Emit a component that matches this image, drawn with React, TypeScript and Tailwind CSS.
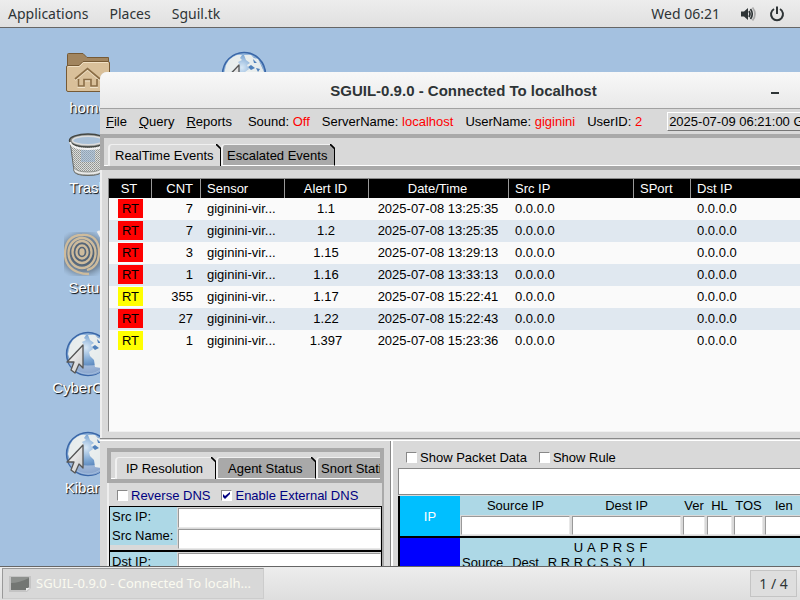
import type { ReactNode } from "react";

type Event = { level: "red" | "yellow"; count: number; id: string; time: string };

const events: Event[] = [
  { level: "red", count: 7, id: "1.1", time: "2025-07-08 13:25:35" },
  { level: "red", count: 7, id: "1.2", time: "2025-07-08 13:25:35" },
  { level: "red", count: 3, id: "1.15", time: "2025-07-08 13:29:13" },
  { level: "red", count: 1, id: "1.16", time: "2025-07-08 13:33:13" },
  { level: "yellow", count: 355, id: "1.17", time: "2025-07-08 15:22:41" },
  { level: "red", count: 27, id: "1.22", time: "2025-07-08 15:22:43" },
  { level: "yellow", count: 1, id: "1.397", time: "2025-07-08 15:23:36" },
];

const panelFont = "font-['Noto_Sans',sans-serif]";
const sunken = "border border-t-[#999] border-l-[#999] border-r-[#e8e8e8] border-b-[#e8e8e8] bg-white outline-none";

function Tab({ active, className, children }: { active?: boolean; className: string; children: ReactNode }) {
  return (
    <button
      role="tab"
      aria-selected={!!active}
      className={`relative flex h-[22px] shrink-0 items-center whitespace-nowrap border-l-2 border-t border-l-[#f0f0f0] border-t-[#f0f0f0] border-r border-r-black rounded-tl-[4px] rounded-tr-[4px] ${active ? "bg-[#d9d9d9]" : "bg-[#a9a9a9] border-b border-b-white"} ${className}`}
    >
      {children}
      <svg className="absolute -right-px -top-px size-[5px]" viewBox="0 0 5 5" aria-hidden="true">
        <path d="M1 0H5V5Z" fill="#d9d9d9" />
        <path d="M0 0L5 5" stroke="#000" strokeWidth="1.6" />
      </svg>
    </button>
  );
}

function Check({ label, checked }: { label: string; checked?: boolean }) {
  return (
    <label className="flex items-center gap-[3px] whitespace-nowrap">
      <span className="relative size-[11px]">
        <input
          type="checkbox"
          defaultChecked={checked}
          className="peer block size-[11px] appearance-none border border-t-[#888] border-l-[#888] border-r-white border-b-white bg-white"
        />
        <svg className="pointer-events-none absolute inset-0 hidden size-[11px] peer-checked:block" viewBox="0 0 11 11" aria-hidden="true">
          <path d="M2 4V7L4 9L9 4V2L4 6Z" fill="#000080" />
        </svg>
      </span>
      {label}
    </label>
  );
}

function Globe({ cursor }: { cursor?: boolean }) {
  return (
    <svg className="size-12" viewBox="0 0 48 48" aria-hidden="true">
      <defs>
        <radialGradient id="sea" cx="45%" cy="35%" r="65%">
          <stop offset="0" stopColor="#d8e8f6" />
          <stop offset="0.45" stopColor="#7fa8d4" />
          <stop offset="1" stopColor="#2c5c9e" />
        </radialGradient>
        <linearGradient id="arrow" x1="0" y1="0" x2="1" y2="1">
          <stop offset="0" stopColor="#fff" />
          <stop offset="1" stopColor="#c8c8c8" />
        </linearGradient>
      </defs>
      <circle cx="24" cy="24" r="21.5" fill="url(#sea)" stroke="#3a67a8" strokeWidth="1.4" />
      <path d="M4 31Q24 40 44 31Q40 45 24 45Q9 44 4 31Z" fill="#d6def0" fillOpacity="0.55" />
      <circle cx="24" cy="24" r="20" fill="none" stroke="#a9c6e6" strokeOpacity="0.7" />
      <path d="M6 15L9 10L13 7L17 5L22 5L20 8L22 10L18 12L20 15L16 18L17 20L12 21L10 28L6 30L4 24Z" fill="#edf0ee" fillOpacity="0.95" />
      <path d="M24 5L31 5L34 8L38 9L41 15L44 22L43 26L39 22L36 24L40 30L37 38L31 37L30 30L26 26L25 22L29 19L27 15L30 13L26 10Z" fill="#edf0ee" fillOpacity="0.95" />
      <path d="M28 17L31 15L35 18L31 20ZM33 9L37 13L34 13ZM36 18L40 19L38 22Z" fill="#4f80bb" />
      {cursor && (
        <path d="M19 15L3 32L10 32L7 40L11 43L15 34L19 38Z" fill="url(#arrow)" stroke="#555" strokeWidth="1.3" strokeLinejoin="round" />
      )}
    </svg>
  );
}

function Folder() {
  return (
    <svg className="size-12" viewBox="0 0 48 48" aria-hidden="true">
      <path d="M3.5 17V4.5Q3.5 3.5 4.5 3.5H19L23 7.5H44.5V20H3.5Z" fill="#a1855f" stroke="#765a35" />
      <path d="M2.5 17Q2.5 15.5 4 15.5H15L19 11.5H44Q45.5 11.5 45.5 13V40Q45.5 41.5 44 41.5H4Q2.5 41.5 2.5 40Z" fill="#d9c09a" stroke="#765a35" />
      <path d="M3.5 17Q4 16.5 5 16.5H15.500L19.5 12.5H44" fill="none" stroke="#f0e0c4" />
      <path d="M11 30L23.5 19.5L36 30M14.5 30V37H20V30.5H27V37H33V30" fill="none" stroke="#f0e2c8" strokeWidth="2" />
      <path d="M11 29L23.5 18.5L36 29M14.5 29V36H20V29.5H27V36H33V29" fill="none" stroke="#8b6d45" strokeWidth="1.7" />
    </svg>
  );
}

function Trash() {
  return (
    <svg className="size-12" viewBox="0 0 48 48" aria-hidden="true">
      <defs>
        <pattern id="mesh" width="2" height="2" patternUnits="userSpaceOnUse">
          <rect width="2" height="2" fill="#dcdedc" />
          <rect width="1" height="1" fill="#8f928f" />
          <rect x="1" y="1" width="1" height="1" fill="#a0a3a0" />
        </pattern>
      </defs>
      <path d="M6 11L10 41Q11 45.5 24 45.5T38 41L42 11Z" fill="url(#mesh)" stroke="#666966" />
      <path d="M17 20H31V32H17Z" fill="#8fb0d4" fillOpacity="0.5" />
      <path d="M9.5 37Q12 42 24 42T38.500 37V41Q36 45 24 45T10 41Z" fill="#e8e9e8" stroke="#70736f" strokeWidth="0.7" />
      <ellipse cx="24" cy="10.5" rx="18.5" ry="6.5" fill="#8e918e" stroke="#444743" strokeWidth="1.5" />
      <ellipse cx="24" cy="10.5" rx="15.5" ry="4.3" fill="#a9c1d9" stroke="#ddd" strokeWidth="1.5" />
      <path d="M6 12Q8 19 24 19T42 12" fill="none" stroke="#f2f2f2" strokeWidth="2" />
    </svg>
  );
}

function Setup() {
  return (
    <svg className="size-12" viewBox="0 0 48 48" aria-hidden="true">
      <defs>
        <radialGradient id="shade" cx="40%" cy="50%" r="60%">
          <stop offset="0.4" stopColor="#536477" />
          <stop offset="0.7" stopColor="#6f8296" stopOpacity="0.8" />
          <stop offset="1" stopColor="#8ea8c2" stopOpacity="0" />
        </radialGradient>
      </defs>
      <rect y="2" width="48" height="44" fill="url(#shade)" />
      <g fill="none" stroke="#cdbb9d" strokeWidth="2.3">
        <ellipse cx="18" cy="22" rx="1.5" ry="2.5" fill="#cdbb9d" />
        <ellipse cx="18" cy="22" rx="5.5" ry="6.5" />
        <ellipse cx="18" cy="22" rx="9.5" ry="11" />
        <ellipse cx="18" cy="23" rx="13.5" ry="15" />
        <path d="M25 44C7 44 1 33 1 24C1 11 8 5 18 5C30 4 35 12 35 22C35 31 31 38 23 40" />
      </g>
      <path d="M34 1L38 8" stroke="#eee" strokeWidth="3" />
    </svg>
  );
}

function DesktopIcon({ label, className, children }: { label: string; className: string; children: ReactNode }) {
  return (
    <button className={`absolute flex w-24 flex-col items-center text-[15px] leading-[20px] text-white [text-shadow:1px_1px_1px_#000] ${className}`}>
      {children}
      <span>{label}</span>
    </button>
  );
}

function StatusItem({ label, value }: { label: string; value: string }) {
  return (
    <span className="whitespace-nowrap">
      {label}: <span className="text-[#f00]">{value}</span>
    </span>
  );
}

function ResolutionGroup({ fields }: { fields: { id: string; label: string }[] }) {
  return (
    <div className="flex gap-px">
      <div className="w-[67px] shrink-0">
        {fields.map((f) => (
          <label key={f.id} htmlFor={f.id} className="block whitespace-nowrap bg-[#add8e6] pl-[2px] leading-[19px]">
            {f.label}
          </label>
        ))}
      </div>
      <div className="flex min-w-0 flex-1 flex-col gap-px pt-px">
        {fields.map((f) => (
          <input key={f.id} id={f.id} className={`block h-5 w-full ${sunken}`} />
        ))}
      </div>
    </div>
  );
}

function PacketField({ id, label, className }: { id: string; label: string; className: string }) {
  return (
    <div className={`flex shrink-0 flex-col items-center ${className}`}>
      <label htmlFor={id} className="h-[19px] leading-[19px]">{label}</label>
      <div className="w-full bg-[#d9d9d9] p-px">
        <input id={id} className={`block h-[19px] w-full ${sunken}`} />
      </div>
    </div>
  );
}

function EventTable() {
  const head = "border-r border-[#999] font-normal last:border-r-0";
  return (
    <div className="shrink-0 border-l-2 border-[#eee] pb-[6px] pl-[6px] pt-[8px]">
      <div className="h-[254px] overflow-hidden border border-r-0 border-[#8a8a8a] border-b-[#f0f0f0] bg-[#fafafa]">
        <table className="w-[780px] table-fixed border-separate border-spacing-0">
          <thead>
            <tr className="h-[19px] bg-black text-white">
              <th className={`w-[43px] pr-[2px] ${head}`}>ST</th>
              <th className={`w-[49px] pr-[7px] text-right ${head}`}>CNT</th>
              <th className={`w-[84px] pl-[6px] text-left ${head}`}>Sensor</th>
              <th className={`w-[84px] pr-[2px] ${head}`}>Alert ID</th>
              <th className={`w-[140px] pr-[2px] ${head}`}>Date/Time</th>
              <th className={`w-[125px] pl-[6px] text-left ${head}`}>Src IP</th>
              <th className={`w-[57px] pl-[6px] text-left ${head}`}>SPort</th>
              <th className={`pl-[6px] text-left ${head}`}>Dst IP</th>
            </tr>
          </thead>
          <tbody>
            {events.map((e) => (
              <tr key={e.id} className="h-[22px] bg-[#fafafa] even:bg-[#e0e8f0] [&>td]:pb-[2px]">
                <td className="pl-[9px]">
                  <span className={`block h-[19px] w-[25px] text-center leading-[19px] ${e.level === "red" ? "bg-[#f00]" : "bg-[#ff0]"}`}>RT</span>
                </td>
                <td className="pr-[8px] text-right">{e.count}</td>
                <td className="whitespace-nowrap pl-[6px]">giginini-vir...</td>
                <td className="pr-[2px] text-center">{e.id}</td>
                <td className="whitespace-nowrap pr-[2px] text-center">{e.time}</td>
                <td className="pl-[6px]">0.0.0.0</td>
                <td />
                <td className="pl-[6px]">0.0.0.0</td>
              </tr>
            ))}
          </tbody>
        </table>
      </div>
    </div>
  );
}

function ResolutionPane() {
  return (
    <section className="w-[291px] shrink-0 overflow-hidden border-r border-[#888] pl-[7px] pr-[6px] pt-[7px]">
      <div role="tablist" className="flex items-end overflow-hidden border-4 border-[#a9a9a9] pl-1 pt-[5px] [box-shadow:inset_0_-1px_#fff]">
        <Tab active className="w-[101px] pl-[9px]">IP Resolution</Tab>
        <Tab className="w-[100px] pl-[10px]">Agent Status</Tab>
        <Tab className="w-[104px] pl-[3px]">Snort Statistics</Tab>
      </div>
      <div className="h-[120px] border-l-2 border-r-2 border-l-[#eee] border-r-[#a9a9a9]">
        <div className="flex h-[23px] items-center gap-[11px] pl-2 pt-[2px] text-[#000080]">
          <Check label="Reverse DNS" />
          <Check label="Enable External DNS" checked />
        </div>
        <div className="border border-black bg-[#d9d9d9]">
          <ResolutionGroup fields={[{ id: "src-ip", label: "Src IP:" }, { id: "src-name", label: "Src Name:" }]} />
          <div className="mt-px h-[2px] bg-black" />
          <ResolutionGroup fields={[{ id: "dst-ip", label: "Dst IP:" }, { id: "dst-name", label: "Dst Name:" }]} />
        </div>
      </div>
    </section>
  );
}

const flags: [string, string][] = [["", "R"], ["", "R"], ["U", "R"], ["A", "C"], ["P", "S"], ["R", "S"], ["S", "Y"], ["F", "I"]];

function PacketPane() {
  return (
    <section className="flex min-w-0 flex-1 flex-col overflow-hidden border-l-2 border-white pl-[5px]">
      <div className="flex h-[27px] shrink-0 items-center gap-[12px] pl-2 pt-[6px]">
        <Check label="Show Packet Data" />
        <Check label="Show Rule" />
      </div>
      <textarea aria-label="Rule" className="block h-[27px] shrink-0 resize-none border border-r-0 border-[#888] bg-white outline-none" />
      <div className="mt-px flex shrink-0 border-l-2 border-black bg-[#add8e6]">
        <div className="flex w-[60px] shrink-0 items-center justify-center bg-[#00bfff] text-white">IP</div>
        <div className="flex h-10">
          <PacketField id="source-ip" label="Source IP" className="w-[111px]" />
          <PacketField id="dest-ip" label="Dest IP" className="w-[111px]" />
          <PacketField id="ver" label="Ver" className="w-[24px]" />
          <PacketField id="hl" label="HL" className="w-[27px]" />
          <PacketField id="tos" label="TOS" className="w-[31px]" />
          <PacketField id="len" label="len" className="w-[40px]" />
        </div>
      </div>
      <div className="h-[2px] shrink-0 bg-black" />
      <div className="flex flex-1 border-l-2 border-black bg-[#add8e6] leading-[15px]">
        <div className="w-[60px] shrink-0 bg-[#00f]" />
        <div className="flex gap-[9px] pl-[2px] pt-[17px]">
          <span>Source</span>
          <span>Dest</span>
        </div>
        <div className="flex pl-[7px] pt-[2px]">
          {flags.map(([top, bottom], i) => (
            <div key={i} className="w-[13px] text-center">
              <div className="h-[15px]">{top}</div>
              <div>{bottom}</div>
            </div>
          ))}
        </div>
      </div>
    </section>
  );
}

export default function App() {
  return (
    <div className="flex h-screen flex-col overflow-hidden bg-[#a4c1e0] font-['Liberation_Sans',Arial,sans-serif] text-[13px] leading-[19px] text-black">
      <header className={`flex h-7 shrink-0 items-center justify-between border-b border-[#666] bg-linear-to-b from-[#ededed] to-[#e0e0e0] pl-2 pr-[15px] text-[14px] text-[#2e3436] ${panelFont}`}>
        <nav className="flex gap-[21px]">
          <button>Applications</button>
          <button>Places</button>
          <button>Sguil.tk</button>
        </nav>
        <div className="flex items-center">
          <span className="mr-5">Wed 06:21</span>
          <button aria-label="Volume" className="mr-[13px]">
            <svg className="h-4 w-4" viewBox="0 0 16 16" aria-hidden="true">
              <path d="M1 5.5H4L8 2V14L4 10.5H1Z" fill="#2e3436" />
              <path d="M9 5Q11 8 9 11" fill="none" stroke="#2e3436" strokeWidth="1.7" />
              <path d="M10.5 3Q14 8 10.5 13" fill="none" stroke="#2e3436" strokeWidth="1.7" />
              <path d="M12.5 1.5Q17.5 8 12.5 14.5" fill="none" stroke="#aaa" strokeWidth="1.7" />
            </svg>
          </button>
          <button aria-label="Power">
            <svg className="h-4 w-4" viewBox="0 0 16 16" aria-hidden="true">
              <path d="M5 3A6 6 0 1 0 11 3M8 .5V8" fill="none" stroke="#2e3436" strokeWidth="2" />
            </svg>
          </button>
        </div>
      </header>

      <main className="relative min-h-0 flex-1 overflow-hidden">
        <DesktopIcon label="home" className="left-[40px] top-[22px]"><Folder /></DesktopIcon>
        <DesktopIcon label="Trash" className="left-[40px] top-[102px]"><Trash /></DesktopIcon>
        <DesktopIcon label="Setup" className="left-[40px] top-[202px]"><Setup /></DesktopIcon>
        <DesktopIcon label="CyberChef" className="left-[40px] top-[302px]"><Globe cursor /></DesktopIcon>
        <DesktopIcon label="Kibana" className="left-[40px] top-[402px]"><Globe cursor /></DesktopIcon>
        <DesktopIcon label="Squert" className="left-[196px] top-[22px]"><Globe cursor /></DesktopIcon>

        <div className="absolute bottom-0 left-[100px] right-0 top-[44px] flex flex-col overflow-hidden rounded-tl-[7px] bg-[#d9d9d9]">
          <div className="flex h-[37px] shrink-0 items-center border-b border-[#a1a1a1] bg-linear-to-b from-[#f8f8f8] to-[#e9e9e9] pl-[70px] pr-[19px] text-[15px] text-[#2e3436]">
            <h1 className="flex-1 pr-[12px] text-center font-bold">SGUIL-0.9.0 - Connected To localhost</h1>
            <button aria-label="Minimize" className="flex h-5 w-3 items-end justify-center pb-[6px]">
              <span className="h-[2px] w-2 bg-[#2e3436]" />
            </button>
          </div>
          <div className="flex h-[25px] shrink-0 items-center pl-[6px]">
            <div role="menubar" className="mr-4 flex gap-3">
              <button role="menuitem"><span className="underline">F</span>ile</button>
              <button role="menuitem"><span className="underline">Q</span>uery</button>
              <button role="menuitem"><span className="underline">R</span>eports</button>
            </div>
            <div className="flex gap-3">
              <StatusItem label="Sound" value="Off" />
              <StatusItem label="ServerName" value="localhost" />
              <StatusItem label="UserName" value="giginini" />
              <StatusItem label="UserID" value="2" />
            </div>
            <div className="ml-[25px] min-w-0 flex-1 overflow-hidden whitespace-nowrap border border-r-0 border-l-white border-t-white border-b-[#777] pl-px leading-[17px]">
              2025-07-09 06:21:00 GMT
            </div>
          </div>
          <div role="tablist" className="flex h-9 shrink-0 items-end border-4 border-r-0 border-[#a9a9a9] pl-1 [box-shadow:inset_0_-1px_#fff]">
            <Tab active className="w-[113px] pl-[5px]">RealTime Events</Tab>
            <Tab className="w-[114px] pl-[4px]">Escalated Events</Tab>
          </div>
          <EventTable />
          <div className="h-[3px] shrink-0 border-b border-t border-b-white border-t-[#888] bg-[#d9d9d9]" />
          <div className="flex min-h-0 flex-1 overflow-hidden">
            <ResolutionPane />
            <PacketPane />
          </div>
        </div>
      </main>

      <footer className={`flex h-[34px] shrink-0 items-center justify-between border-t border-[#666] bg-linear-to-b from-[#ededed] to-[#dedede] pl-[2px] pr-[3px] ${panelFont}`}>
        <button className="flex h-[31px] w-[262px] items-center gap-[5px] border border-b-[#ccc] border-l-[#999] border-r-[#ccc] border-t-[#999] bg-[#d8d8d8] pl-[6px] text-[13px] text-[#fafaf0]">
          <svg className="h-4 w-[22px]" viewBox="0 0 22 16" aria-hidden="true">
            <path d="M0 0H22V12L18 16H0Z" fill="#c4c4c4" />
            <path d="M2 1H20V11L17 14H2Z" fill="#737673" />
            <path d="M2 7Q10 7 20 2V1H2Z" fill="#8d908d" />
            <path d="M17 15V12H21Z" fill="#eee" />
          </svg>
          <span>SGUIL-0.9.0 - Connected To localh...</span>
        </button>
        <div className="flex h-[27px] w-[47px] items-center justify-center border border-[#c4c4c4] bg-[#dedede] text-[14px] text-[#2e3436]">1 / 4</div>
      </footer>
    </div>
  );
}
